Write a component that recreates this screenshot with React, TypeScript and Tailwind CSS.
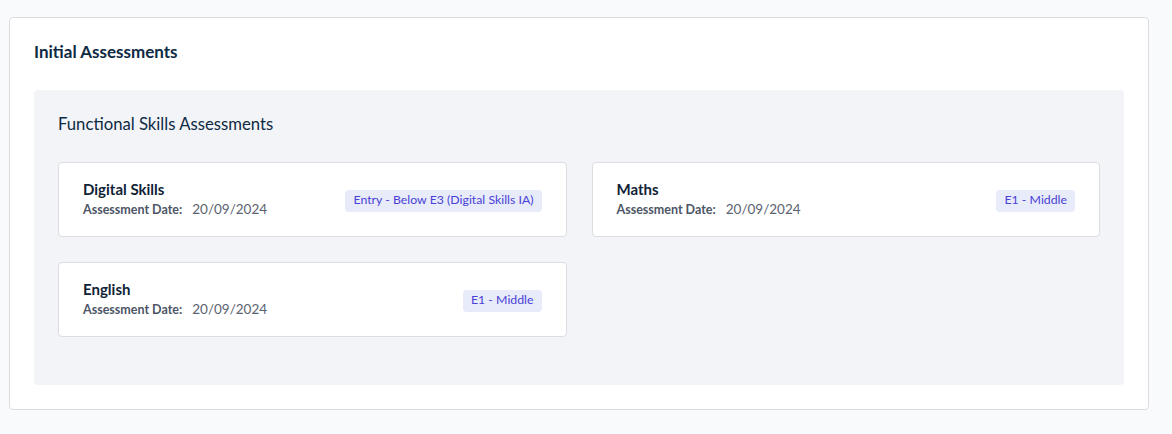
import React from "react"

interface Assessment {
  subject: string
  date: string
  level: string
}

const assessments: Assessment[] = [
  { subject: "Digital Skills", date: "20/09/2024", level: "Entry - Below E3 (Digital Skills IA)" },
  { subject: "Maths", date: "20/09/2024", level: "E1 - Middle" },
  { subject: "English", date: "20/09/2024", level: "E1 - Middle" },
]

const AssessmentCard: React.FC<{ item: Assessment }> = ({ item }) => (
  <div className="h-[75px] bg-white border border-[#dcdde1] rounded-[4px] px-[24px] flex items-center justify-between">
    <div>
      <div className="text-[15px] leading-[20px] font-bold text-[#0f2236]">{item.subject}</div>
      <div className="flex items-baseline leading-[20px]">
        <span className="text-[12.5px] font-bold text-[#4d5566]">Assessment Date:</span>
        <span className="ml-[10px] text-[13.5px] text-[#5b6270]">{item.date}</span>
      </div>
    </div>
    <span className="mt-[2px] h-[22px] px-[8px] flex items-center rounded-[4px] bg-[#e7ebfa] text-[12.3px] text-[#4a3fd6]">
      {item.level}
    </span>
  </div>
)

export default function App() {
  return (
    <div className="min-h-screen bg-[#f9fafc] pt-[17px] pl-[9px]" style={{ fontFamily: "Lato, 'Noto Sans', sans-serif" }}>
      <div className="w-[1140px] bg-white border border-[#dcdde0] rounded-[4px] p-[24px]">
        <h1 className="text-[17px] leading-[20px] font-bold text-[#0d2a44] mb-[28px]">Initial Assessments</h1>

        <div className="bg-[#f3f4f8] rounded-[4px] pt-[24px] px-[24px] pb-[48px]">
          <h2 className="text-[16.7px] leading-[20px] text-[#0d2a44] mb-[28px]">Functional Skills Assessments</h2>
          <div className="grid grid-cols-2 gap-[25px]">
            {assessments.map((a) => (
              <AssessmentCard key={a.subject} item={a} />
            ))}
          </div>
        </div>
      </div>
    </div>
  )
}
